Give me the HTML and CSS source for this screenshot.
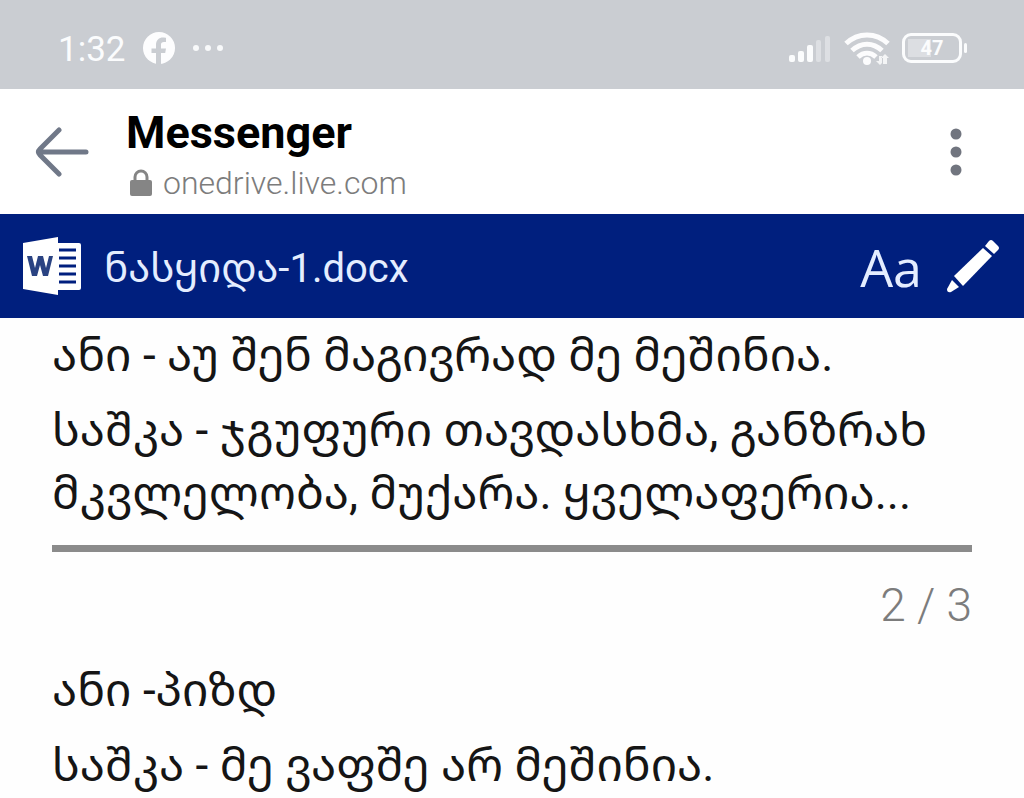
FILE: index.html
```html
<!doctype html>
<html lang="ka">
    <head>
        <meta charset="utf-8">
        <meta name="viewport" content="width=device-width, initial-scale=1">
        <title>ნასყიდა-1.docx</title>
        <link rel="stylesheet" href="styles.css">
    </head>
    <body>
        <div class="status-bar">
            <div class="status-left">
                <span class="clock">1:32</span>
                <svg class="icon" width="34" height="34" viewBox="0 0 34 34" aria-hidden="true">
                    <circle cx="17" cy="17" r="16" fill="#fdfdfe"/>
                    <path d="M14 34V22H9.500V17.500H14V14C14 9 17 6.500 21 6.500c1.500 0 3 .3 3 .3v4.200h-2c-2.200 0-3 1.200-3 2.600v3.900h5l-.8 4.500H19V34z" fill="#cacdd2"/>
                </svg>
                <svg class="icon" width="32" height="8" viewBox="0 0 32 8" fill="#f8f9fa" aria-hidden="true">
                    <circle cx="4" cy="4" r="3"/>
                    <circle cx="16" cy="4" r="3"/>
                    <circle cx="28" cy="4" r="3"/>
                </svg>
            </div>
            <div class="status-right">
                <svg class="icon" width="44" height="30" viewBox="0 0 44 30" fill="#fbfcfd" aria-hidden="true">
                    <rect x="1" y="22" width="6" height="7" rx="2"/>
                    <rect x="10" y="18" width="6" height="11" rx="2"/>
                    <rect x="19" y="12" width="6" height="17" rx="2"/>
                    <rect x="28" y="7" width="5" height="22" rx="2" fill="#dddfe3"/>
                    <rect x="37" y="3" width="5" height="26" rx="2" fill="#dddfe3"/>
                </svg>
                <svg class="icon" width="46" height="34" viewBox="0 0 46 34" aria-hidden="true">
                    <g fill="none" stroke="#fcfcfd" stroke-width="5">
                        <path d="M2 12.500C14 1 32 1 44 12.500"/>
                        <path d="M8 19.500c9-8.500 21-8.500 30 0"/>
                        <path d="M14 26c5.500-5 12.500-5 18 0"/>
                    </g>
                    <circle cx="23" cy="30" r="4" fill="#fcfcfd"/>
                    <path d="M35 25v5h-3l4 4 2-2v-7zM39 33v-6h-2l4-4 4 4h-2v6z" fill="#f4f5f6"/>
                </svg>
                <span class="battery"><span class="battery-level">47</span></span>
            </div>
        </div>
        <header class="app-bar">
            <button class="icon-button" type="button" aria-label="Back">
                <svg width="56" height="52" viewBox="0 0 56 52" fill="none" stroke="#707888" stroke-width="5" stroke-linecap="round" stroke-linejoin="round">
                    <path d="M25 4 6 23q-3 3 0 6L25 48M6 26h46"/>
                </svg>
            </button>
            <div class="site">
                <h1 class="site-title">Messenger</h1>
                <div class="site-address">
                    <svg width="24" height="28" viewBox="0 0 24 28" aria-hidden="true">
                        <path d="M6 12V8a6 6 0 0 1 12 0v4" fill="none" stroke="#858585" stroke-width="3"/>
                        <rect x="1" y="11" width="22" height="16" rx="2" fill="#858585"/>
                    </svg>
                    <span>onedrive.live.com</span>
                </div>
            </div>
            <button class="icon-button" type="button" aria-label="Menu">
                <svg width="12" height="48" viewBox="0 0 12 48" fill="#71757f">
                    <circle cx="6" cy="6" r="5.500"/>
                    <circle cx="6" cy="24" r="5.500"/>
                    <circle cx="6" cy="42" r="5.500"/>
                </svg>
            </button>
        </header>
        <div class="doc-bar">
            <svg class="word-logo" width="60" height="60" viewBox="0 0 60 60" role="img" aria-label="Word">
                <path d="M35 7h22a2 2 0 0 1 2 2v43a2 2 0 0 1-2 2H35z" fill="#fff"/>
                <path d="M37 14h17M37 22h17M37 30h17M37 38h17M37 46h17" stroke="#001f7e" stroke-width="3"/>
                <path d="M1 7 36 1v58L1 53z" fill="#fff"/>
                <path d="M5 20h5l3 12 3-12h5l3 12 3-12h4l-5 20h-5l-3-11-3 11h-5z" fill="#2a4382"/>
            </svg>
            <h2 class="doc-name">ნასყიდა-1.docx</h2>
            <button class="text-size" type="button" aria-label="Text size">Aa</button>
            <button class="icon-button" type="button" aria-label="Edit">
                <svg width="54" height="54" viewBox="0 0 54 54" fill="#fff">
                    <path d="m6 41 7 7-8 5q-4 1-4-3z"/>
                    <path d="M8 37 37 9l9 8-29 30z"/>
                    <path d="m39 7 4-5q2-2 4 0l5 5q2 2 0 4l-4 4z"/>
                </svg>
            </button>
        </div>
        <main class="document">
            <p>ანი - აუ შენ მაგივრად მე მეშინია.</p>
            <p>საშკა - ჯგუფური თავდასხმა, განზრახ მკვლელობა, მუქარა. ყველაფერია...</p>
            <hr class="page-break">
            <div class="page-number">2 / 3</div>
            <p>ანი -პიზდ</p>
            <p>საშკა - მე ვაფშე არ მეშინია.</p>
        </main>
    </body>
</html>
```

FILE: styles.css
```css
* {
    box-sizing: border-box;
}
body {
    background: #fefefe;
    color: #151515;
    font-family: Roboto, "Noto Sans Georgian", "DejaVu Sans", sans-serif;
    margin: 0;
    overflow: hidden;
}
h1, h2, p {
    margin: 0;
}
button {
    background: none;
    border: 0;
    color: inherit;
    font-family: inherit;
    padding: 0;
}
svg {
    display: block;
    flex: none;
}

.status-bar {
    align-items: center;
    background: #cacdd2;
    color: #fbfcfd;
    display: flex;
    height: 89px;
    justify-content: space-between;
    padding: 6px 56px 0 58px;
}
.status-left,
.status-right {
    align-items: center;
    display: flex;
    gap: 16px;
}
.clock {
    font-size: 35px;
    line-height: 40px;
    padding-top: 4px;
}
.status-right {
    gap: 12px;
}
.battery {
    border: 3px solid #fbfcfd;
    border-radius: 9px;
    display: block;
    height: 30px;
    margin-right: 6px;
    padding: 3px;
    position: relative;
    width: 60px;
}
.battery::after {
    background: #fbfcfd;
    border-radius: 2px;
    content: "";
    height: 10px;
    position: absolute;
    right: -8px;
    top: 7px;
    width: 3px;
}
.battery-level {
    background: linear-gradient(to right, #dcdee2 47%, transparent 47%);
    display: block;
    font-size: 20px;
    font-weight: bold;
    line-height: 18px;
    text-align: center;
}

.app-bar {
    align-items: center;
    background: #fff;
    display: flex;
    height: 125px;
    padding: 0 62px 0 34px;
}
.site {
    flex: 1;
    margin-left: 36px;
    padding-top: 6px;
}
.site-title {
    color: #000;
    font-size: 45px;
    font-weight: bold;
    line-height: 56px;
}
.site-address {
    align-items: center;
    color: #7c7c7c;
    display: flex;
    font-size: 32px;
    font-weight: 300;
    gap: 10px;
    line-height: 44px;
    padding-left: 3px;
}

.doc-bar {
    align-items: center;
    background: #001f7e;
    color: #e4edff;
    display: flex;
    height: 104px;
    padding: 0 24px 0 22px;
}
.doc-name {
    flex: 1;
    font-size: 40px;
    font-weight: 400;
    margin-left: 22px;
}
.text-size {
    font-family: "Open Sans", sans-serif;
    font-size: 52px;
    margin-right: 24px;
}

.document {
    font-size: 46px;
    line-height: 63px;
    padding: 6px 52px 0;
}
.document p {
    margin-bottom: 12px;
}
.page-break {
    background: #8b8b8b;
    border: 0;
    height: 7px;
    margin: 20px 0 0;
}
.page-number {
    color: #7c7c7c;
    font-weight: 300;
    margin: 22px 0;
    text-align: right;
}
```
